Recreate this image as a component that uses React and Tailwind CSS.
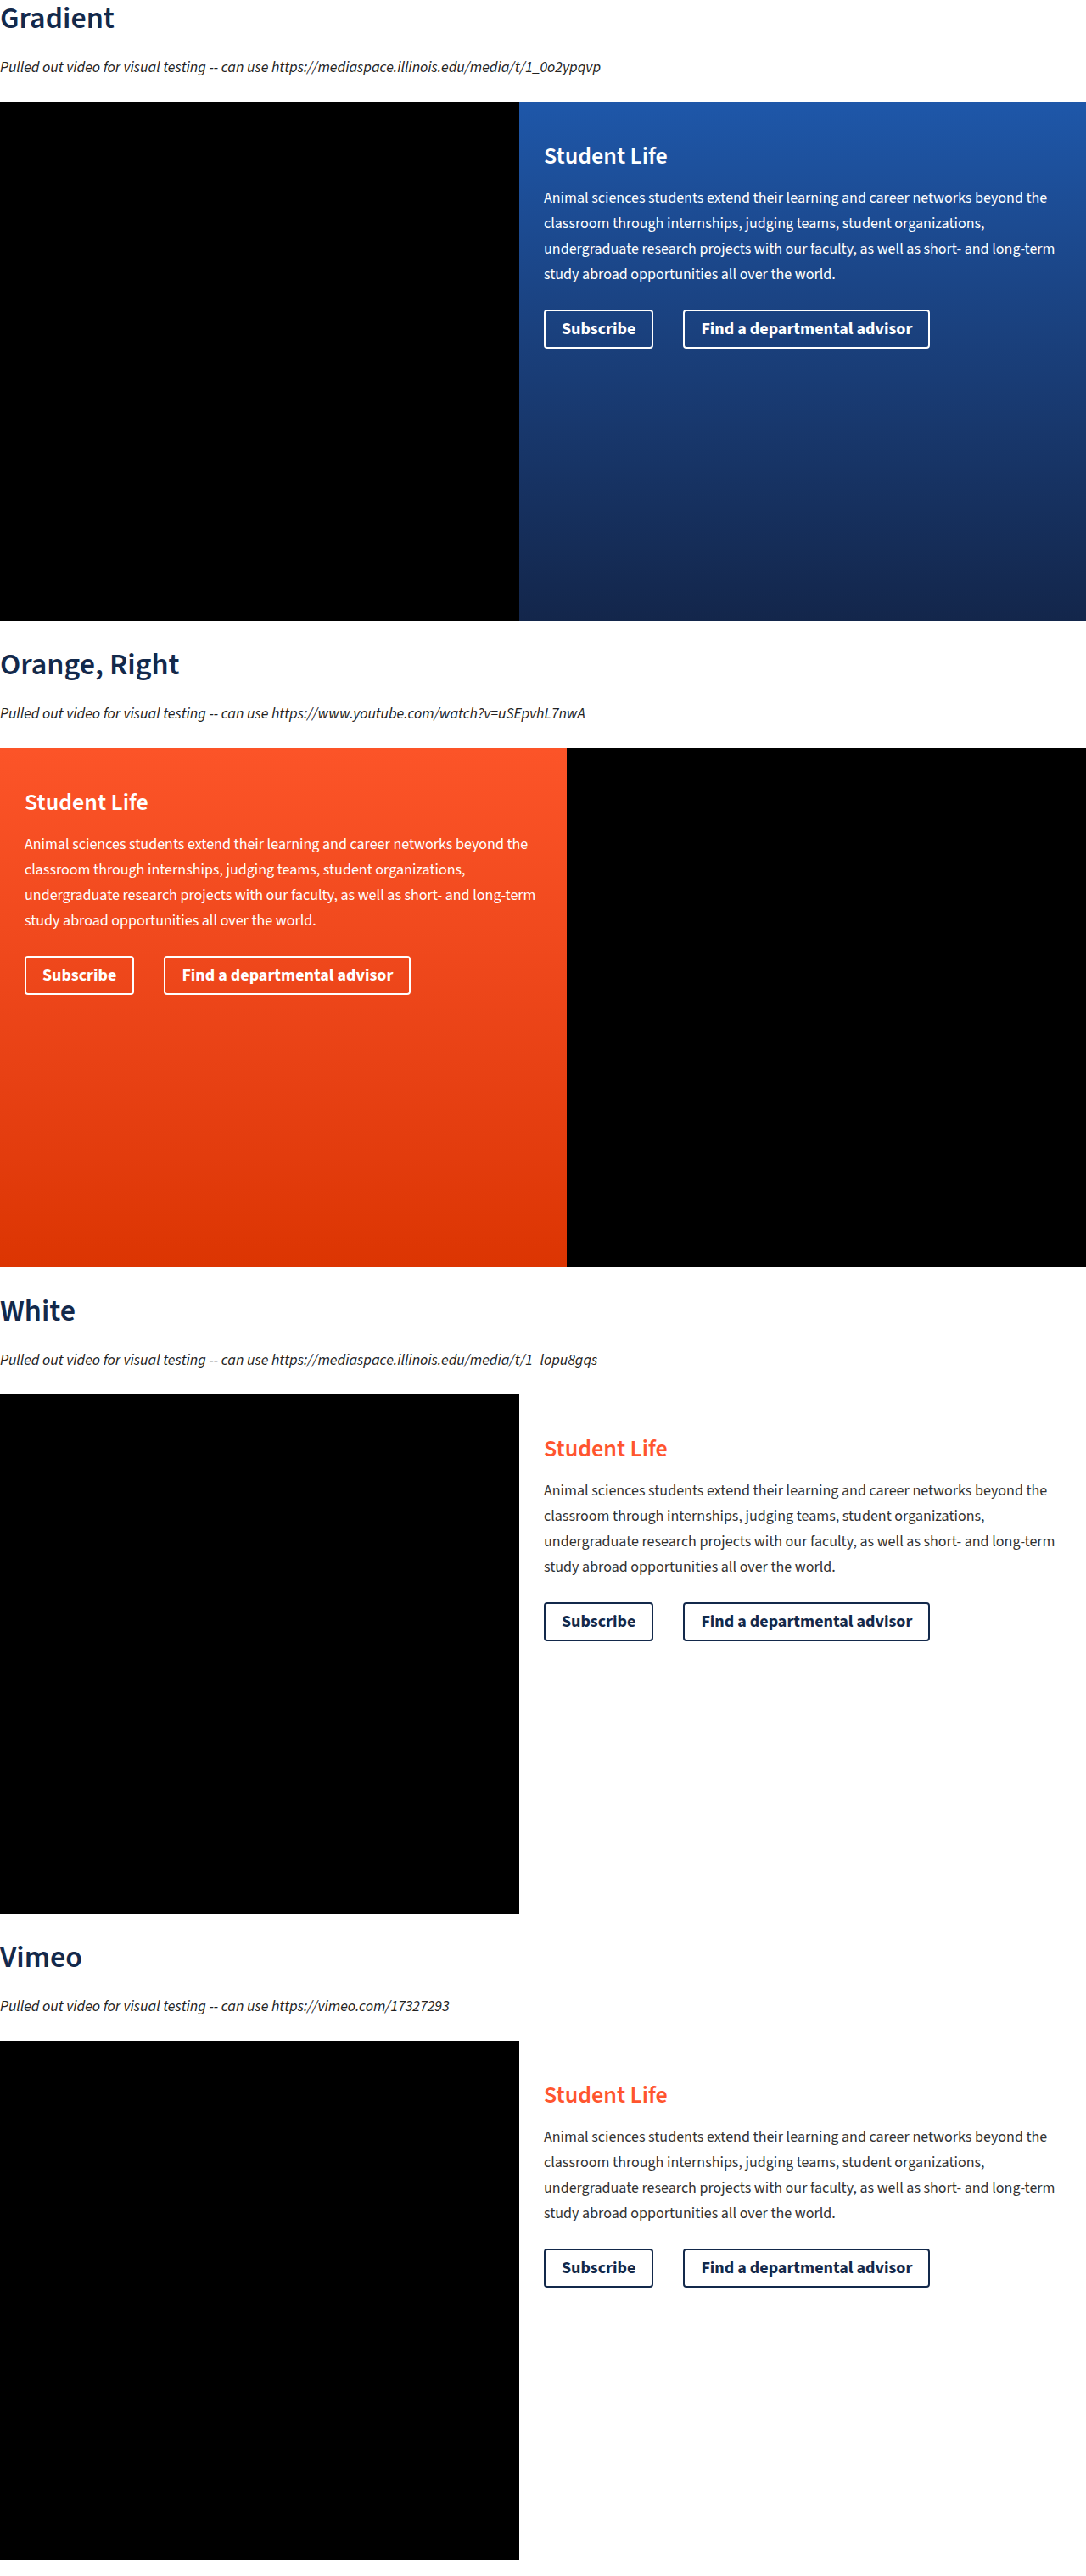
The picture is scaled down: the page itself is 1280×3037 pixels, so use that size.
import React from 'react';

const copy =
  'Animal sciences students extend their learning and career networks beyond the classroom through internships, judging teams, student organizations, undergraduate research projects with our faculty, as well as short- and long-term study abroad opportunities all over the world.';

const sections = [
  {
    title: 'Gradient',
    note: 'Pulled out video for visual testing -- can use https://mediaspace.illinois.edu/media/t/1_0o2ypqvp',
    theme: 'gradient',
    right: false,
  },
  {
    title: 'Orange, Right',
    note: 'Pulled out video for visual testing -- can use https://www.youtube.com/watch?v=uSEpvhL7nwA',
    theme: 'orange',
    right: true,
  },
  {
    title: 'White',
    note: 'Pulled out video for visual testing -- can use https://mediaspace.illinois.edu/media/t/1_lopu8gqs',
    theme: 'white',
    right: false,
  },
  {
    title: 'Vimeo',
    note: 'Pulled out video for visual testing -- can use https://vimeo.com/17327293',
    theme: 'white',
    right: false,
  },
];

const panelStyles = {
  gradient: {
    panel: 'bg-gradient-to-b from-[#1e57a9] to-[#13264b] text-white',
    heading: 'text-white',
    body: 'text-white',
    button: 'border-white text-white',
  },
  orange: {
    panel: 'bg-gradient-to-b from-[#fc5428] to-[#dc3502] text-white',
    heading: 'text-white',
    body: 'text-white',
    button: 'border-white text-white',
  },
  white: {
    panel: 'bg-white',
    heading: 'text-[#ff552e]',
    body: 'text-[#333333]',
    button: 'border-[#13294b] text-[#13294b]',
  },
};

function Panel({ theme }) {
  const s = panelStyles[theme];
  return (
    <div className={`flex-1 px-[29px] pt-[48px] ${s.panel}`}>
      <h3 className={`text-[28px] font-semibold leading-[1.2] ${s.heading}`}>Student Life</h3>
      <p className={`mt-[17px] text-[18px] leading-[30px] ${s.body}`}>{copy}</p>
      <div className="mt-[26px] flex gap-[35px]">
        <a className={`flex h-[46px] items-center rounded-[4px] border-2 px-[19px] text-[20px] font-bold ${s.button}`}>
          Subscribe
        </a>
        <a className={`flex h-[46px] items-center rounded-[4px] border-2 px-[19px] text-[20px] font-bold ${s.button}`}>
          Find a departmental advisor
        </a>
      </div>
    </div>
  );
}

function VideoSection({ title, note, theme, right, first }) {
  return (
    <section>
      <h2 className={`text-[36px] font-semibold leading-[43px] text-[#13294b] ${first ? '' : 'mt-[30px]'}`}>
        {title}
      </h2>
      <p className="mt-[23px] text-[18px] italic leading-[27px] text-[#222222]">{note}</p>
      <div className={`mt-[27px] flex h-[612px] ${right ? 'flex-row-reverse' : ''}`}>
        <div className="h-[612px] w-[612px] shrink-0 bg-black" />
        <Panel theme={theme} />
      </div>
    </section>
  );
}

export default function App() {
  return (
    <div className="min-h-[3037px] bg-white font-['Source_Sans_Pro','Source_Sans_3',Lato,sans-serif]">
      {sections.map((s, i) => (
        <VideoSection key={s.title} {...s} first={i === 0} />
      ))}
    </div>
  );
}
